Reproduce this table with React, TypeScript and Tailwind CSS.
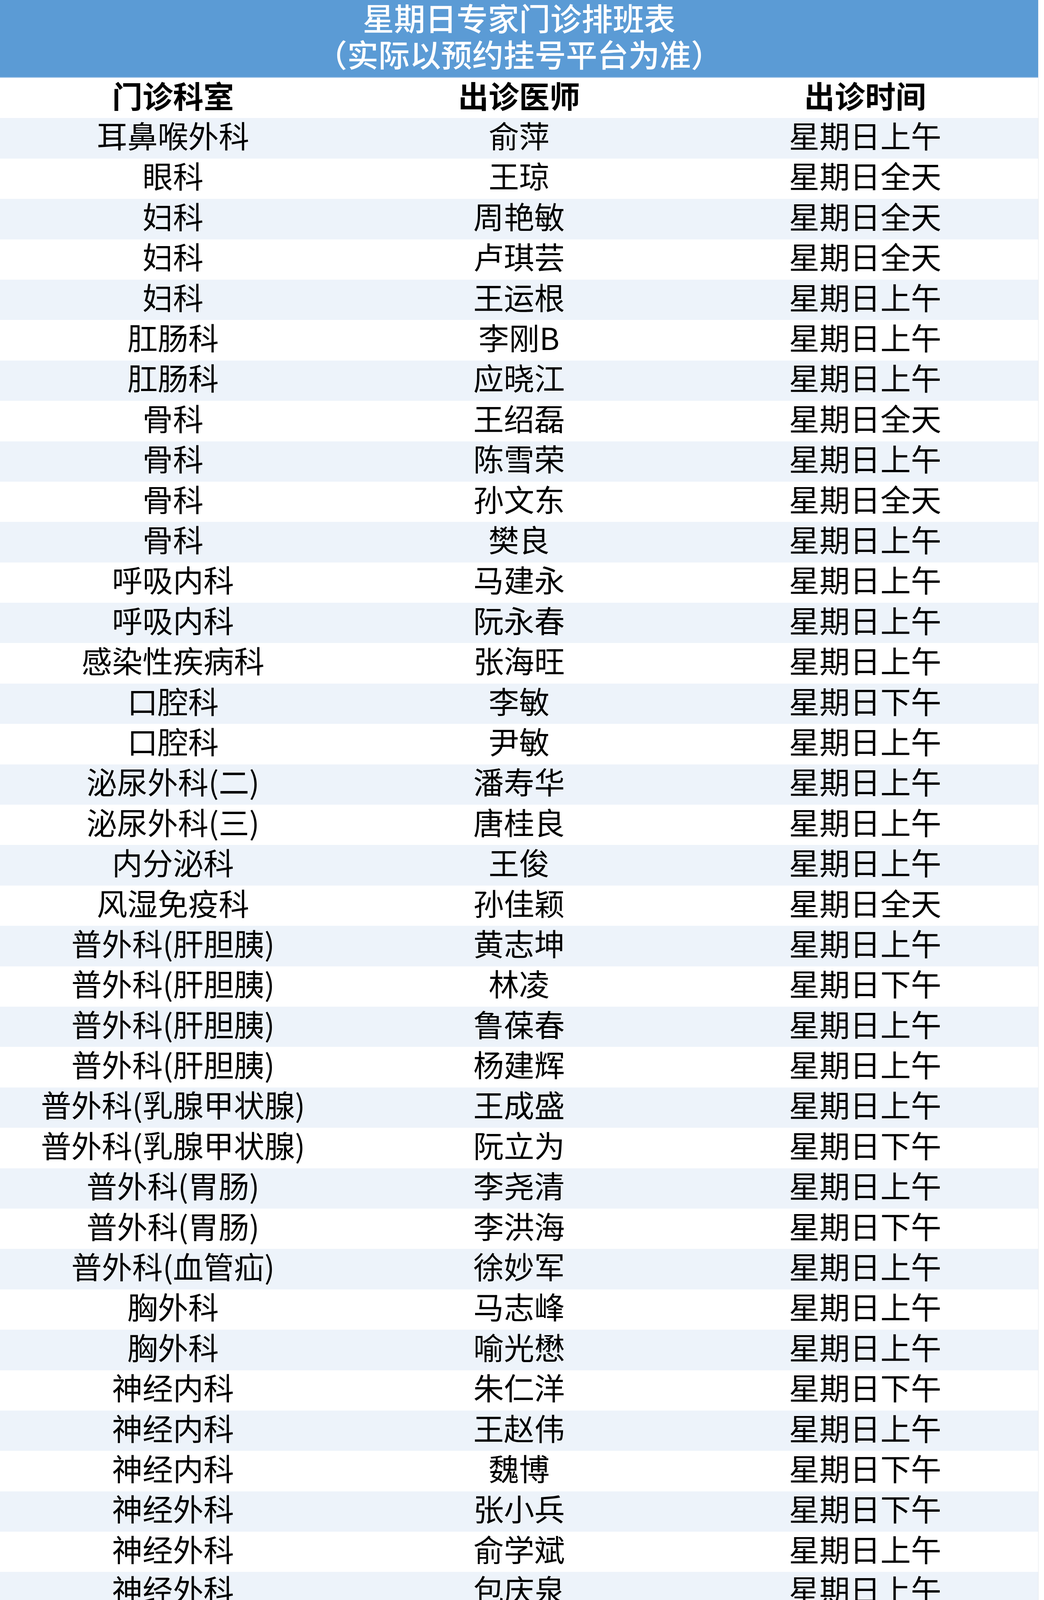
import React from 'react';

type Row = [string, string, string];

const rows: Row[] = [
  ['耳鼻喉外科', '俞萍', '星期日上午'],
  ['眼科', '王琼', '星期日全天'],
  ['妇科', '周艳敏', '星期日全天'],
  ['妇科', '卢琪芸', '星期日全天'],
  ['妇科', '王运根', '星期日上午'],
  ['肛肠科', '李刚B', '星期日上午'],
  ['肛肠科', '应晓江', '星期日上午'],
  ['骨科', '王绍磊', '星期日全天'],
  ['骨科', '陈雪荣', '星期日上午'],
  ['骨科', '孙文东', '星期日全天'],
  ['骨科', '樊良', '星期日上午'],
  ['呼吸内科', '马建永', '星期日上午'],
  ['呼吸内科', '阮永春', '星期日上午'],
  ['感染性疾病科', '张海旺', '星期日上午'],
  ['口腔科', '李敏', '星期日下午'],
  ['口腔科', '尹敏', '星期日上午'],
  ['泌尿外科(二)', '潘寿华', '星期日上午'],
  ['泌尿外科(三)', '唐桂良', '星期日上午'],
  ['内分泌科', '王俊', '星期日上午'],
  ['风湿免疫科', '孙佳颖', '星期日全天'],
  ['普外科(肝胆胰)', '黄志坤', '星期日上午'],
  ['普外科(肝胆胰)', '林凌', '星期日下午'],
  ['普外科(肝胆胰)', '鲁葆春', '星期日上午'],
  ['普外科(肝胆胰)', '杨建辉', '星期日上午'],
  ['普外科(乳腺甲状腺)', '王成盛', '星期日上午'],
  ['普外科(乳腺甲状腺)', '阮立为', '星期日下午'],
  ['普外科(胃肠)', '李尧清', '星期日上午'],
  ['普外科(胃肠)', '李洪海', '星期日下午'],
  ['普外科(血管疝)', '徐妙军', '星期日上午'],
  ['胸外科', '马志峰', '星期日上午'],
  ['胸外科', '喻光懋', '星期日上午'],
  ['神经内科', '朱仁洋', '星期日下午'],
  ['神经内科', '王赵伟', '星期日上午'],
  ['神经内科', '魏博', '星期日下午'],
  ['神经外科', '张小兵', '星期日下午'],
  ['神经外科', '俞学斌', '星期日上午'],
  ['神经外科', '包庆泉', '星期日上午'],
  ['肾内科', '龚淑文', '星期日上午'],
  ['肾内科', '谢海英', '星期日上午'],
  ['肿瘤内科', '赵建国', '星期日上午'],
  ['放疗科', '徐俊', '星期日上午'],
  ['疼痛科', '陈栋樑', '星期日上午'],
  ['消化内科', '潘颖颖', '星期日上午'],
  ['消化内科', '沈华海', '星期日上午'],
  ['小儿内科', '邵晓丽', '星期日上午'],
  ['小儿内科', '姚欢迎', '星期日上午'],
  ['小儿内科', '胡淑英', '星期日下午'],
  ['心血管内科', '彭放', '星期日上午'],
  ['心血管内科', '徐步云', '星期日下午'],
  ['心血管内科', '许富康', '星期日上午'],
  ['心血管内科', '孙勇', '星期日上午'],
  ['血液内科', '洪攀', '星期日下午'],
  ['血液内科', '封蔚莹', '星期日上午'],
  ['中医科', '徐晓晏', '星期日全天'],
  ['针灸科', '陈荣', '星期日上午'],
  ['超声科（腹部）', '孙建明', '星期日上午'],
  ['超声科（心血管）', '诸磊', '星期日上午'],
  ['放射科', '章俞', '星期日下午'],
  ['放射科', '赵振华', '星期日上午'],
  ['心理健康门诊', '叶兰英', '星期日下午'],
];

export default function App() {
  return (
    <div className="w-[2672px] h-[6510px] overflow-hidden bg-white font-['Noto_Sans_CJK_SC','Noto_Sans',sans-serif] text-black">
      <div className="w-[2658px] border-r border-[#e3e6ea]">
        {/* Title */}
        <div className="h-[197px] pb-[18px] bg-[#5b9bd5] flex flex-col items-center justify-center text-white text-[80px] leading-[93px] font-medium">
          <div>星期日专家门诊排班表</div>
          <div>（实际以预约挂号平台为准）</div>
        </div>
        <div className="h-[2px] bg-[#8fb8e3]" />

        {/* Column header */}
        <div className="grid grid-cols-3 h-[103.4px] pb-[16px] items-center text-center text-[78px] leading-none font-bold">
          <div>门诊科室</div>
          <div>出诊医师</div>
          <div>出诊时间</div>
        </div>

        {/* Rows */}
        {rows.map((r, i) => (
          <div
            key={i}
            className={`grid grid-cols-3 h-[103.4px] pb-[18px] items-center text-center text-[78px] leading-none whitespace-nowrap ${
              i % 2 === 0 ? 'bg-[#edf3fa]' : 'bg-white'
            }`}
          >
            <div>{r[0]}</div>
            <div>{r[1]}</div>
            <div>{r[2]}</div>
          </div>
        ))}
        <div className="h-[3px] bg-[#5b9bd5]" />
      </div>
    </div>
  );
}
